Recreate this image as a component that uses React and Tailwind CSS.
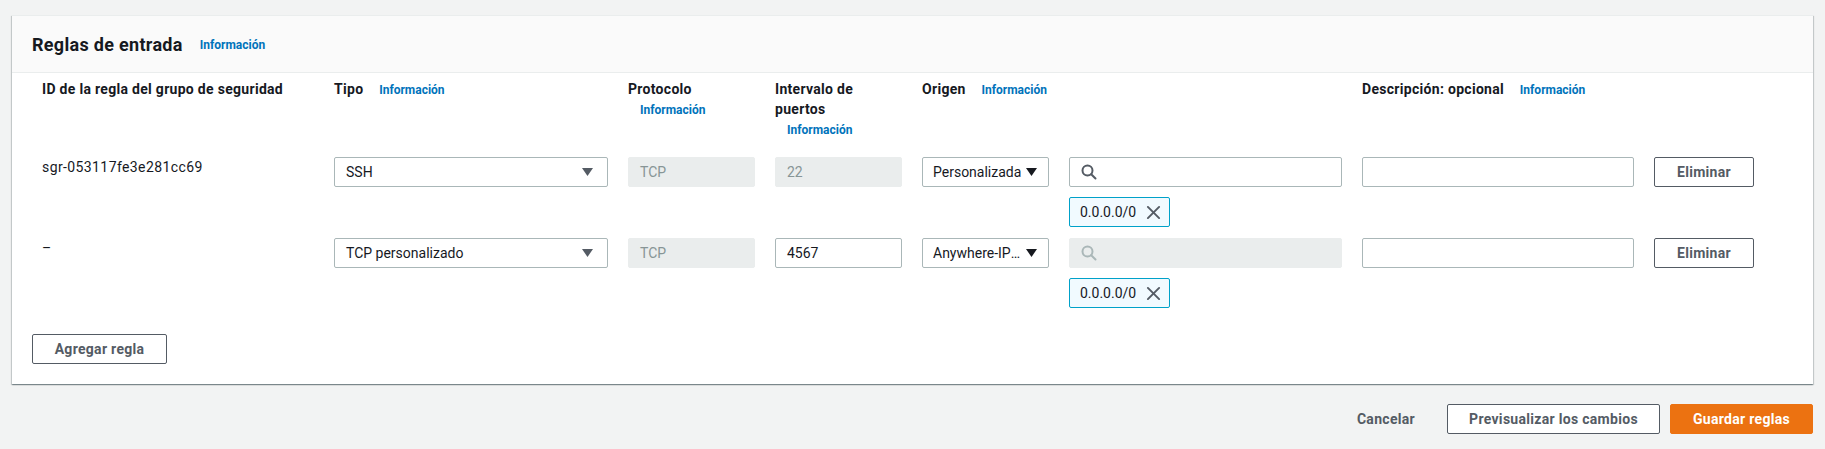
import { useState } from "react";

const font = { fontFamily: "Roboto, 'Noto Sans', sans-serif" };

const cols =
  "grid grid-cols-[282px_274px_127px_127px_127px_273px_272px_100px] gap-x-[20px]";

const inputBase =
  "h-[30px] w-full rounded-[2px] border text-[14px] leading-[20px] flex items-center px-[11px]";

const btnNormal =
  "h-[30px] rounded-[2px] border border-[#545b64] bg-white text-[14px] font-bold tracking-[0.3px] text-[#545b64] flex items-center justify-center";

function Info({ className = "ml-[12px]" }) {
  return (
    <a className={`text-[12px] font-bold tracking-normal text-[#0073bb] cursor-pointer ${className}`}>
      Información
    </a>
  );
}

function Caret({ color = "#545b64" }) {
  return (
    <svg width="11" height="8" viewBox="0 0 11 8" className="shrink-0">
      <polygon points="0,0 11,0 5.5,8" fill={color} />
    </svg>
  );
}

function Search({ color = "#545b64" }) {
  return (
    <svg width="16" height="16" viewBox="0 0 16 16" fill="none" stroke={color} strokeWidth="2">
      <circle cx="6.5" cy="6.5" r="5" />
      <line x1="10.2" y1="10.2" x2="14.5" y2="14.5" strokeLinecap="round" />
    </svg>
  );
}

function Token() {
  return (
    <div className="mt-[10px] flex h-[30px] w-[101px] items-center justify-between rounded-[2px] border border-[#00a1c9] bg-[#f1faff] pl-[10px] pr-[8px] text-[14px] text-[#16191f]">
      <span>0.0.0.0/0</span>
      <svg width="15" height="15" viewBox="0 0 16 16" stroke="#545b64" strokeWidth="2" strokeLinecap="round">
        <line x1="2" y1="2" x2="14" y2="14" />
        <line x1="14" y1="2" x2="2" y2="14" />
      </svg>
    </div>
  );
}

function Row({ id, tipo, port, portDisabled, origen, searchDisabled }) {
  return (
    <div className={`${cols} items-start`}>
      <div className="pl-[10px] text-[14px] leading-[20px] tracking-[0.4px] text-[#16191f]">{id}</div>
      <div className={`${inputBase} justify-between border-[#aab7b8] bg-white pr-[14px] text-[#16191f]`}>
        <span>{tipo}</span>
        <Caret />
      </div>
      <div className={`${inputBase} border-[#eaeded] bg-[#eaeded] text-[#879596]`}>TCP</div>
      {portDisabled ? (
        <div className={`${inputBase} border-[#eaeded] bg-[#eaeded] text-[#879596]`}>{port}</div>
      ) : (
        <div className={`${inputBase} border-[#aab7b8] bg-white text-[#16191f]`}>{port}</div>
      )}
      <div className="flex h-[30px] w-full items-center gap-[3px] rounded-[2px] border border-[#aab7b8] bg-white pl-[10px] pr-[11px] text-[14px] leading-[20px] text-[#16191f]">
        <span className="min-w-0 flex-1 truncate">{origen}</span>
        <Caret color="#16191f" />
      </div>
      <div>
        {searchDisabled ? (
          <div className={`${inputBase} border-[#eaeded] bg-[#eaeded]`}>
            <Search color="#aab7b8" />
          </div>
        ) : (
          <div className={`${inputBase} border-[#aab7b8] bg-white`}>
            <Search />
          </div>
        )}
        <Token />
      </div>
      <div className={`${inputBase} border-[#aab7b8] bg-white`} />
      <button className={`${btnNormal} w-[100px]`}>Eliminar</button>
    </div>
  );
}

export default function App() {
  const [rows] = useState([
    { id: "sgr-053117fe3e281cc69", tipo: "SSH", port: "22", portDisabled: true, origen: "Personalizada", searchDisabled: false },
    { id: "–", tipo: "TCP personalizado", port: "4567", portDisabled: false, origen: "Anywhere-IPv4", searchDisabled: true },
  ]);

  return (
    <div className="min-h-screen bg-[#f2f3f3] px-[12px] pt-[15px] pb-[16px] text-[#16191f]" style={font}>
      {/* Card */}
      <div className="bg-white shadow-[0_1px_1px_0_rgba(0,28,36,0.3),1px_1px_1px_0_rgba(0,28,36,0.15),-1px_1px_1px_0_rgba(0,28,36,0.15)] border-t border-[#eaeded]">
        <div className="flex items-center border-b border-[#eaeded] bg-[#fafafa] px-[20px] pt-[17px] pb-[15px]">
          <h2 className="text-[18px] font-bold leading-[24px] tracking-[0.3px]">Reglas de entrada</h2>
          <Info className="ml-[17px]" />
        </div>

        <div className="px-[20px] pt-[6px] pb-[20px]">
          {/* Column headers */}
          <div className={`${cols} text-[14px] font-bold leading-[20px] tracking-[0.3px]`}>
            <div className="pl-[10px]">ID de la regla del grupo de seguridad</div>
            <div>
              Tipo <Info />
            </div>
            <div>
              Protocolo <Info />
            </div>
            <div>
              Intervalo de puertos <Info />
            </div>
            <div className="col-span-2">
              Origen <Info />
            </div>
            <div>
              Descripción: opcional <Info />
            </div>
            <div />
          </div>

          <div className="mt-[17px] flex flex-col gap-[11px]">
            {rows.map((r) => (
              <Row key={r.id} {...r} />
            ))}
          </div>

          <button className={`${btnNormal} mt-[26px] w-[135px]`}>Agregar regla</button>
        </div>
      </div>

      {/* Footer actions */}
      <div className="mt-[20px] flex items-center justify-end gap-[10px]">
        <button className="h-[30px] px-[22px] text-[14px] font-bold tracking-[0.3px] text-[#545b64]">Cancelar</button>
        <button className={`${btnNormal} w-[213px]`}>Previsualizar los cambios</button>
        <button className="flex h-[30px] w-[143px] items-center justify-center rounded-[2px] border border-[#ec7211] bg-[#ec7211] text-[14px] font-bold tracking-[0.3px] text-white">
          Guardar reglas
        </button>
      </div>
    </div>
  );
}
